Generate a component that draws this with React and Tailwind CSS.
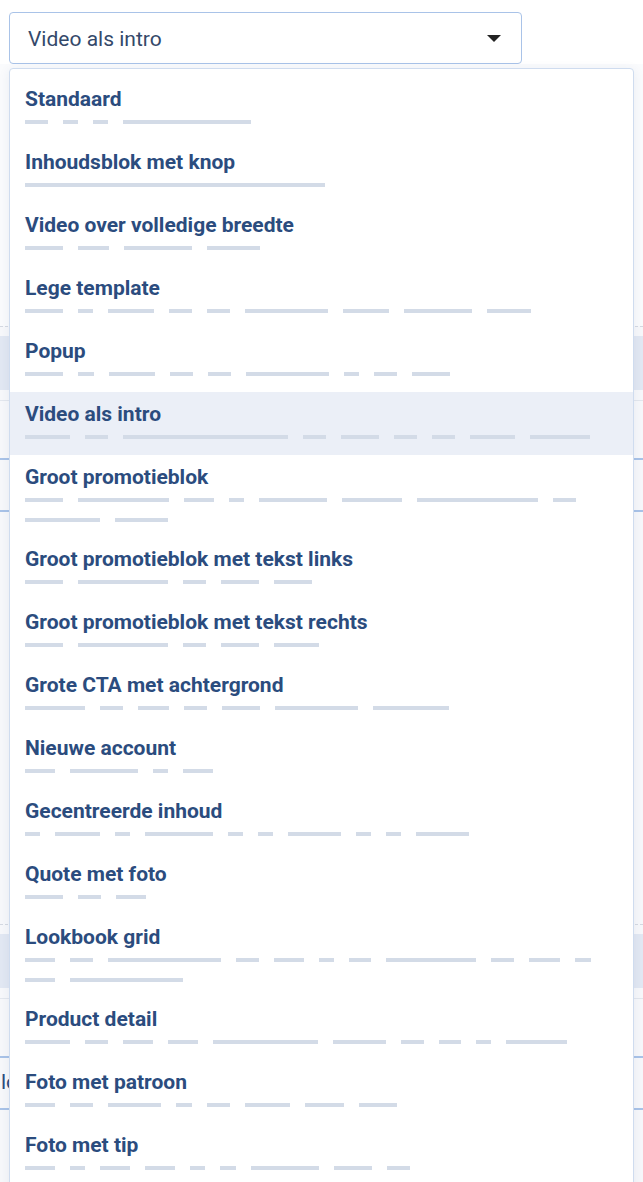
import React from 'react'

// Dash widths per line (px), gap between dashes is fixed
const TEMPLATES = [
    { name: 'Standaard', lines: [[23, 15, 15, 128]] },
    { name: 'Inhoudsblok met knop', lines: [[300]] },
    { name: 'Video over volledige breedte', lines: [[38, 31, 68, 53]] },
    { name: 'Lege template', lines: [[38, 15, 46, 23, 23, 83, 46, 68, 44]] },
    { name: 'Popup', lines: [[38, 16, 46, 23, 23, 83, 15, 23, 38]] },
    { name: 'Video als intro', lines: [[45, 23, 165, 23, 38, 23, 23, 45, 60]], active: true },
    {
        name: 'Groot promotieblok',
        lines: [
            [38, 91, 30, 15, 68, 60, 121, 23],
            [75, 53],
        ],
    },
    { name: 'Groot promotieblok met tekst links', lines: [[38, 90, 23, 38, 38]] },
    { name: 'Groot promotieblok met tekst rechts', lines: [[38, 90, 23, 38, 45]] },
    { name: 'Grote CTA met achtergrond', lines: [[60, 23, 31, 23, 38, 83, 76]] },
    { name: 'Nieuwe account', lines: [[30, 68, 15, 30]] },
    { name: 'Gecentreerde inhoud', lines: [[15, 45, 15, 68, 15, 15, 53, 15, 15, 53]] },
    { name: 'Quote met foto', lines: [[38, 23, 30]] },
    {
        name: 'Lookbook grid',
        lines: [
            [30, 23, 113, 23, 30, 15, 22, 90, 23, 31, 16],
            [30, 113],
        ],
    },
    { name: 'Product detail', lines: [[45, 23, 30, 30, 105, 53, 23, 22, 15, 61]] },
    { name: 'Foto met patroon', lines: [[30, 23, 53, 16, 23, 45, 39, 38]] },
    { name: 'Foto met tip', lines: [[30, 15, 30, 30, 15, 16, 68, 38, 23]] },
]

function DashLine({ widths, first }) {
    return (
        <div className={`flex items-center gap-x-[15px] ${first ? 'h-[20px]' : 'h-[19px]'}`}>
            {widths.map((w, i) => (
                <span key={i} className="block h-[4px] bg-[#d3dbe7]" style={{ width: w }} />
            ))}
        </div>
    )
}

function BackgroundSection({ label }) {
    return (
        <div className="border-t border-dashed border-[#d4d9e2] bg-[#f7f8fb]">
            <div className="mt-[9px] h-[54px] bg-[#e2e8f3]" />
            <div className="mt-[10px] h-[58px] border-t border-[#e3e7ee]" />
            <div className="flex h-[52px] items-center border-t-2 border-[#a9c3e8] pl-[1px] text-[21px] text-[#2b4c7e]">
                {label}
            </div>
            <div className="h-[414px] border-t-2 border-[#a9c3e8]" />
        </div>
    )
}

export default function App() {
    return (
        <div
            className="relative h-[1182px] overflow-hidden bg-white"
            style={{ fontFamily: 'Roboto, "Noto Sans", Arial, sans-serif' }}
        >
            {/* Select */}
            <div className="px-[9px] pt-[12px]">
                <div className="flex h-[52px] w-[513px] items-center justify-between rounded-[4px] border border-[#a9c3e8] bg-white pl-[18px] pr-[20px]">
                    <span className="mt-[4px] text-[21px] text-[#34496a]">Video als intro</span>
                    <span className="h-0 w-0 border-x-[7px] border-t-[7px] border-x-transparent border-t-[#222]" />
                </div>
            </div>

            {/* Page content under the dropdown */}
            <div className="h-[262px] bg-[#fafbfd]" />
            <BackgroundSection label="" />
            <BackgroundSection label="lo" />

            {/* Dropdown menu */}
            <div className="absolute left-[9px] top-[68px] w-[625px] rounded-[4px] border border-[#cfdcef] bg-white py-[8px] shadow-[0_2px_12px_rgba(40,70,120,0.08)]">
                {TEMPLATES.map((t) => (
                    <div
                        key={t.name}
                        className={`px-[15px] pb-[8px] pt-[10px] ${t.active ? 'bg-[#ebeff7]' : ''}`}
                    >
                        <div className="h-[24px] whitespace-nowrap text-[21px] font-bold leading-[24px] text-[#2b4c7e]">
                            {t.name}
                        </div>
                        <div className="pt-[1px]">
                            {t.lines.map((l, i) => (
                                <DashLine key={i} widths={l} first={i === 0} />
                            ))}
                        </div>
                    </div>
                ))}
            </div>
        </div>
    )
}
